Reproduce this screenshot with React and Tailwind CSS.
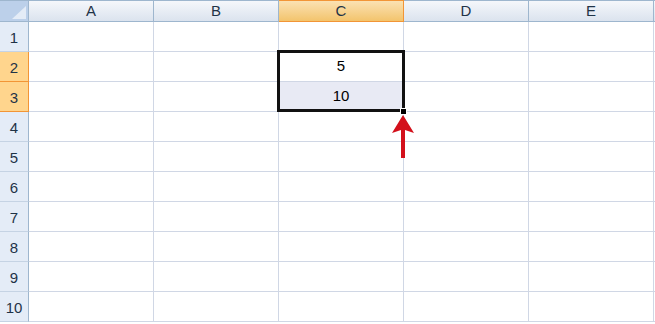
import React from "react";

const cols = ["A", "B", "C", "D", "E"];
const rows = [1, 2, 3, 4, 5, 6, 7, 8, 9, 10];

export default function App() {
  return (
    <div
      className="relative w-[655px] h-[324px] overflow-hidden bg-white text-[#1f3347]"
      style={{ fontFamily: '"Liberation Sans", Arial, sans-serif' }}
    >
      {/* header row */}
      <div className="flex h-[22px]">
        <div className="relative w-[29px] h-[22px] shrink-0 bg-[#bcd0ea] border-r border-b border-t border-[#9eb6ce]">
          <svg className="absolute right-[2px] bottom-[2px]" width="14" height="13" viewBox="0 0 14 13">
            <polygon points="14,0 14,13 0,13" fill="#e4ecf7" />
          </svg>
        </div>
        {cols.map((c) => (
          <div
            key={c}
            className={
              c === "C"
                ? "w-[125px] h-[22px] shrink-0 flex items-center justify-center text-[15px] border-r border-b border-t border-[#f29536] bg-gradient-to-b from-[#fbe2b2] to-[#f3c46c]"
                : "w-[125px] h-[22px] shrink-0 flex items-center justify-center text-[15px] border-r border-b border-t border-[#9eb6ce] bg-gradient-to-b from-[#f5f7fb] to-[#dbe3ee]"
            }
          >
            {c}
          </div>
        ))}
        <div className="flex-1 h-[22px] border-b border-t border-[#9eb6ce] bg-gradient-to-b from-[#f5f7fb] to-[#dbe3ee]" />
      </div>

      {rows.map((r) => {
        const sel = r === 2 || r === 3;
        return (
          <div key={r} className="flex h-[30px]">
            <div
              className={
                sel
                  ? "w-[29px] h-[30px] shrink-0 flex items-end justify-center pb-[2px] text-[15px] bg-[#ffd58d] border-r border-b border-[#f29536]"
                  : "w-[29px] h-[30px] shrink-0 flex items-end justify-center pb-[2px] text-[15px] bg-[#e4ecf7] border-r border-b border-r-[#9eb6ce] border-b-[#c5d3e4]"
              }
            >
              {r}
            </div>
            {cols.map((c) => (
              <div
                key={c}
                className={
                  "w-[125px] h-[30px] shrink-0 flex items-center justify-center text-[15px] text-black border-r border-b border-[#d0d7e5] " +
                  (c === "C" && r === 3 ? "bg-[#e8eaf4]" : "bg-white")
                }
              >
                {c === "C" && r === 2 ? "5" : c === "C" && r === 3 ? "10" : ""}
              </div>
            ))}
            <div className="flex-1 h-[30px] border-b border-[#d0d7e5] bg-white" />
          </div>
        );
      })}

      {/* selection box */}
      <div className="absolute left-[277px] top-[50px] w-[128px] h-[62px] border-[3px] border-[#111] pointer-events-none" />
      {/* fill handle */}
      <div className="absolute left-[400px] top-[108px] w-[7px] h-[7px] bg-black border border-white" />

      {/* red arrow */}
      <svg className="absolute left-[390px] top-[114px]" width="26" height="46" viewBox="0 0 26 46">
        <polygon points="13,1 24,19 15,16 15,44 11,44 11,16 2,19" fill="#d3101b" />
      </svg>
    </div>
  );
}
